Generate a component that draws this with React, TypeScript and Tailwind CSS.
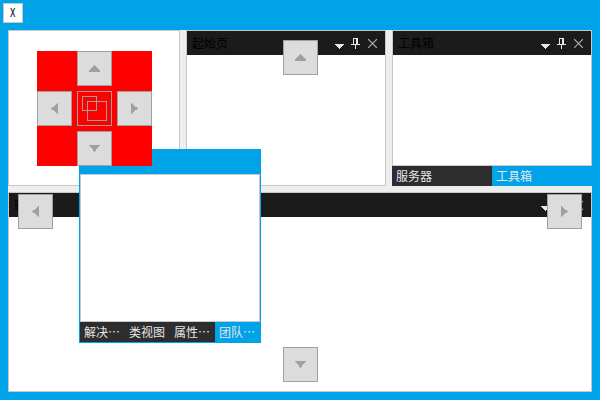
import type { ReactNode } from "react";

type Direction = "up" | "down" | "left" | "right";

const arrows: Record<Direction, string> = {
  up: "M17 14h1v1h1v1h1v1h1v1h1v1h1v2h-11v-2h1v-1h1v-1h1v-1h1v-1h1z",
  down: "M12 14h11v1h-1v1h-1v1h-1v1h-1v2h-1v1h-1v-1h-1v-2h-1v-1h-1v-1h-1v-1h-1z",
  left: "M20 12h1v11h-1v-1h-1v-1h-1v-1h-1v-1h-2v-1h-1v-1h1v-1h2v-1h1v-1h1v-1h1z",
  right: "M14 12h1v1h1v1h1v1h1v1h2v1h1v1h-1v1h-2v1h-1v1h-1v1h-1v1h-1z",
};

function DockButton({ direction, className = "" }: { direction: Direction; className?: string }) {
  return (
    <button className={`block size-[35px] bg-[#dcdcdc] ${className}`}>
      <svg width="35" height="35" viewBox="0 0 35 35" shapeRendering="crispEdges">
        <rect x="0.5" y="0.5" width="34" height="34" fill="none" stroke="#a0a0a0" />
        <path d={arrows[direction]} fill="#a0a0a0" />
      </svg>
    </button>
  );
}

function CaptionIcons() {
  return (
    <svg width="43" height="11" viewBox="0 0 43 11" className="ml-auto mr-[7px]" shapeRendering="crispEdges">
      <path d="M0 6h9v1h-1v1h-1v1h-1v1h-1v1h-1v-1h-1v-1h-1v-1h-1v-1h-1z" fill="#e6e6e6" />
      <path d="M18 0h5v6h2v1h-4v4h-1v-4h-4v-1h2zM19 1v5h2v-5z" fill="#e6e6e6" fillRule="evenodd" />
      <path
        d="M33.5 1.5l8 8M41.5 1.5l-8 8"
        stroke="#a9a9a9"
        strokeWidth="1.1"
        strokeLinecap="square"
        fill="none"
        shapeRendering="auto"
      />
    </svg>
  );
}

function Caption({ title }: { title: string }) {
  return (
    <div className="flex h-6 shrink-0 items-start bg-[#1b1b1c] pl-[5px] pt-[7px] text-black">
      <span className="-mt-px leading-3">{title}</span>
      <CaptionIcons />
    </div>
  );
}

function Panel({ children, className = "" }: { children?: ReactNode; className?: string }) {
  return <section className={`flex flex-col border border-[#c8c8c8] bg-white ${className}`}>{children}</section>;
}

function Tab({ label, active = false }: { label: string; active?: boolean }) {
  return (
    <div
      className={`h-5 min-w-0 flex-1 overflow-hidden whitespace-nowrap pl-1 leading-5 text-[#e6e6e6] ${
        active ? "bg-[#00a2e8]" : "bg-[#2d2d30]"
      }`}
    >
      {label}
    </div>
  );
}

function Compass() {
  return (
    <div className="absolute left-[37px] top-[51px] grid grid-cols-3 gap-[5px] bg-[#ff0000]">
      <DockButton direction="up" className="col-start-2" />
      <DockButton direction="left" className="col-start-1" />
      <svg width="35" height="35" viewBox="0 0 35 35" fill="none" stroke="#a0a0a0" shapeRendering="crispEdges">
        <rect x="0.5" y="0.5" width="34" height="34" />
        <rect x="5.5" y="5.5" width="14" height="14" />
        <rect x="10.5" y="10.5" width="19" height="19" />
      </svg>
      <DockButton direction="right" />
      <DockButton direction="down" className="col-start-2" />
    </div>
  );
}

export default function App() {
  return (
    <main
      lang="zh-CN"
      className="relative flex h-[400px] w-[600px] flex-col overflow-hidden bg-[#00a2e8] px-2 pb-2 font-['Noto_Sans_CJK_SC',sans-serif] text-[12px]"
    >
      <div className="-ml-[5px] flex h-[30px] shrink-0 items-start pt-[3px]">
        <button className="flex size-5 items-center justify-center border border-[#c8c8c8] bg-white pt-px font-['Liberation_Mono',monospace] leading-none text-black">
          <span className="-ml-px scale-x-75">X</span>
        </button>
      </div>

      <div className="flex flex-1 flex-col gap-1.5 bg-[#eeeeee]">
        <div className="flex h-[156px] gap-1.5">
          <Panel className="w-[172px]" />
          <Panel className="w-[200px]">
            <Caption title="起始页" />
          </Panel>
          <div className="flex w-[200px] flex-col">
            <Panel className="flex-1">
              <Caption title="工具箱" />
            </Panel>
            <div className="flex">
              <Tab label="服务器" />
              <Tab label="工具箱" active />
            </div>
          </div>
        </div>
        <Panel className="flex-1">
          <Caption title="输出" />
        </Panel>
      </div>

      <div className="absolute left-[79px] top-[149px] flex h-[194px] w-[182px] flex-col border border-[#00a2e8] bg-[#00a2e8] pt-6">
        <div className="flex-1 border border-[#c8c8c8] bg-white" />
        <div className="flex">
          <Tab label="解决…" />
          <Tab label="类视图" />
          <Tab label="属性…" />
          <Tab label="团队…" active />
        </div>
      </div>

      <Compass />
      <DockButton direction="up" className="absolute left-[283px] top-10" />
      <DockButton direction="left" className="absolute left-[18px] top-[194px]" />
      <DockButton direction="right" className="absolute left-[547px] top-[194px]" />
      <DockButton direction="down" className="absolute left-[283px] top-[347px]" />
    </main>
  );
}
